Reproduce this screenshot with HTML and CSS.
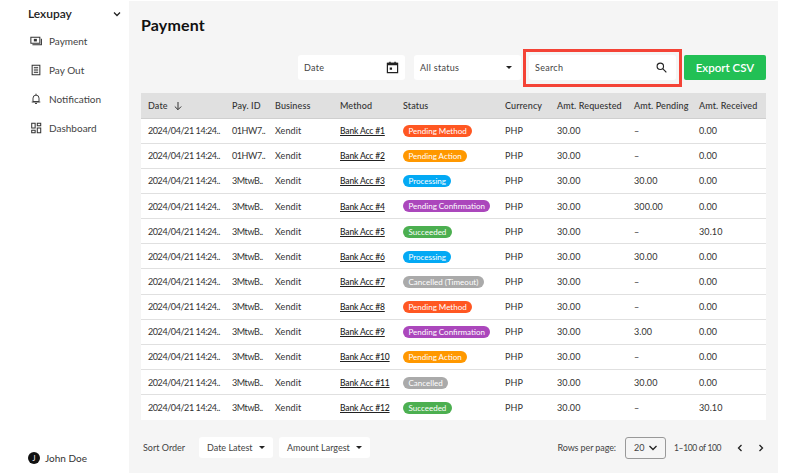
FILE: index.html
```html
<!DOCTYPE html>
<html lang="en">
<head>
<meta charset="utf-8">
<title>Payment</title>
<link rel="stylesheet" href="styles.css">
</head>
<body>
<div class="app">
<aside class="sidebar">
  <div class="brand"><span>Lexupay</span>
    <svg class="chev" viewBox="0 0 10 10"><path d="M2 3.5l3 3 3-3" fill="none" stroke="#222" stroke-width="1.3"/></svg></div>
  <nav class="nav">
    <a class="nav-item"><svg class="nav-ic" viewBox="0 0 14 14"><path d="M1 2.500h10.500v7h-10.500z" fill="none" stroke="#333" stroke-width="1.200"/><path d="M4.500 4.500h3.500v3h-3.500z" fill="#333"/><path d="M13.300 4.500v7h-10.500" fill="none" stroke="#333" stroke-width="1.200"/></svg><span>Payment</span></a>
    <a class="nav-item"><svg class="nav-ic" viewBox="0 0 14 14"><path d="M2.500 1.500h9v11h-9z" fill="none" stroke="#333" stroke-width="1.2"/><path d="M4.500 4h5M4.500 6h5M4.500 8h5M4.500 10h5" stroke="#333"/></svg><span>Pay Out</span></a>
    <a class="nav-item"><svg class="nav-ic" viewBox="0 0 14 14"><path d="M3.500 10v-4a3.500 3.500 0 0 1 7 0v4zM2 10.500h10" fill="none" stroke="#333" stroke-width="1.1"/><path d="M7 .8v1.500M5.800 12.200h2.400" stroke="#333" stroke-width="1.1"/></svg><span>Notification</span></a>
    <a class="nav-item"><svg class="nav-ic" viewBox="0 0 14 14"><path d="M2 1.500h4v5.500h-4zM8.500 1.500h4v3h-4zM8.500 7h4v5.500h-4zM2 9.500h4v3h-4z" fill="none" stroke="#333" stroke-width="1.2"/></svg><span>Dashboard</span></a>
  </nav>
  <div class="user"><span class="avatar">J</span><span>John Doe</span></div>
</aside>
<main class="main">
  <h1 class="title">Payment</h1>
  <div class="filters">
    <div class="field date"><span>Date</span><svg class="ic14" viewBox="0 0 14 14"><path d="M1.500 2.500h11v10h-11z" fill="none" stroke="#222" stroke-width="1.300"/><path d="M1.500 2h11v2.500h-11zM3.500.8h1.500v2h-1.500zM9 .8h1.500v2h-1.500zM4 7h2.500v2.500h-2.500z" fill="#222"/></svg></div>
    <div class="field status"><span>All status</span><i class="caret"></i></div>
    <div class="search-wrap"><div class="field search"><span>Search</span><svg class="ic12" viewBox="0 0 12 12"><circle cx="4.700" cy="4.700" r="3.500" fill="none" stroke="#222" stroke-width="1.200"/><path d="M7.300 7.300l4 4" stroke="#222" stroke-width="1.300"/></svg></div></div>
    <button class="export">Export CSV</button>
  </div>
  <table class="grid">
    <thead><tr><th>Date <svg class="sort" viewBox="0 0 10 10"><path d="M5 1v7.500M1.800 5.500l3.200 3.200 3.200-3.200" fill="none" stroke="#333" stroke-width="1"/></svg></th><th>Pay. ID</th><th>Business</th><th>Method</th><th>Status</th><th>Currency</th><th>Amt. Requested</th><th>Amt. Pending</th><th>Amt. Received</th></tr></thead>
    <tbody>
      <tr><td>2024/04/21 14:24..</td><td>01HW7..</td><td>Xendit</td><td><a class="acc">Bank Acc #1</a></td><td><span class="pill orange">Pending Method</span></td><td>PHP</td><td>30.00</td><td>–</td><td>0.00</td></tr>
      <tr><td>2024/04/21 14:24..</td><td>01HW7..</td><td>Xendit</td><td><a class="acc">Bank Acc #2</a></td><td><span class="pill amber">Pending Action</span></td><td>PHP</td><td>30.00</td><td>–</td><td>0.00</td></tr>
      <tr><td>2024/04/21 14:24..</td><td>3MtwB..</td><td>Xendit</td><td><a class="acc">Bank Acc #3</a></td><td><span class="pill blue">Processing</span></td><td>PHP</td><td>30.00</td><td>30.00</td><td>0.00</td></tr>
      <tr><td>2024/04/21 14:24..</td><td>3MtwB..</td><td>Xendit</td><td><a class="acc">Bank Acc #4</a></td><td><span class="pill purple">Pending Confirmation</span></td><td>PHP</td><td>30.00</td><td>300.00</td><td>0.00</td></tr>
      <tr><td>2024/04/21 14:24..</td><td>3MtwB..</td><td>Xendit</td><td><a class="acc">Bank Acc #5</a></td><td><span class="pill green">Succeeded</span></td><td>PHP</td><td>30.00</td><td>–</td><td>30.10</td></tr>
      <tr><td>2024/04/21 14:24..</td><td>3MtwB..</td><td>Xendit</td><td><a class="acc">Bank Acc #6</a></td><td><span class="pill blue">Processing</span></td><td>PHP</td><td>30.00</td><td>30.00</td><td>0.00</td></tr>
      <tr><td>2024/04/21 14:24..</td><td>3MtwB..</td><td>Xendit</td><td><a class="acc">Bank Acc #7</a></td><td><span class="pill grey">Cancelled (Timeout)</span></td><td>PHP</td><td>30.00</td><td>–</td><td>0.00</td></tr>
      <tr><td>2024/04/21 14:24..</td><td>3MtwB..</td><td>Xendit</td><td><a class="acc">Bank Acc #8</a></td><td><span class="pill orange">Pending Method</span></td><td>PHP</td><td>30.00</td><td>–</td><td>0.00</td></tr>
      <tr><td>2024/04/21 14:24..</td><td>3MtwB..</td><td>Xendit</td><td><a class="acc">Bank Acc #9</a></td><td><span class="pill purple">Pending Confirmation</span></td><td>PHP</td><td>30.00</td><td>3.00</td><td>0.00</td></tr>
      <tr><td>2024/04/21 14:24..</td><td>3MtwB..</td><td>Xendit</td><td><a class="acc">Bank Acc #10</a></td><td><span class="pill amber">Pending Action</span></td><td>PHP</td><td>30.00</td><td>–</td><td>0.00</td></tr>
      <tr><td>2024/04/21 14:24..</td><td>3MtwB..</td><td>Xendit</td><td><a class="acc">Bank Acc #11</a></td><td><span class="pill grey">Cancelled</span></td><td>PHP</td><td>30.00</td><td>30.00</td><td>0.00</td></tr>
      <tr><td>2024/04/21 14:24..</td><td>3MtwB..</td><td>Xendit</td><td><a class="acc">Bank Acc #12</a></td><td><span class="pill green">Succeeded</span></td><td>PHP</td><td>30.00</td><td>–</td><td>30.10</td></tr>
    </tbody>
  </table>
  <div class="footer">
    <span class="sort-label">Sort Order</span>
    <div class="drop d1"><span>Date Latest</span><i class="caret"></i></div>
    <div class="drop d2"><span>Amount Largest</span><i class="caret"></i></div>
    <span class="rows-label">Rows per page:</span>
    <div class="rows"><span>20</span><svg class="chev" viewBox="0 0 10 10"><path d="M1.500 3l3.500 3.500 3.500-3.500" fill="none" stroke="#222" stroke-width="1.300"/></svg></div>
    <span class="range">1–100 of 100</span>
    <svg class="pg first" viewBox="0 0 10 10"><path d="M6.500 2l-3 3 3 3" fill="none" stroke="#222" stroke-width="1.300"/></svg>
    <svg class="pg" viewBox="0 0 10 10"><path d="M3.500 2l3 3-3 3" fill="none" stroke="#222" stroke-width="1.300"/></svg>
  </div>
</main>
</div>
</body>
</html>
```
FILE: styles.css
```css
* { box-sizing: border-box; }
html, body { margin: 0; padding: 0; }
body { width: 802px; height: 473px; overflow: hidden; background: #fff; font-family: "Lato", "Liberation Sans", sans-serif; color: #222; }
.app { display: flex; height: 473px; }
.sidebar { width: 129px; flex: none; display: flex; flex-direction: column; padding: 7px 7px 9px 28px; }
.brand { display: flex; justify-content: space-between; align-items: center; font-size: 12px; font-weight: 600; color: #222; height: 13px; }
.chev { width: 10px; height: 10px; flex: none; }
.nav { display: flex; flex-direction: column; margin-top: 6px; margin-left: 2px; }
.nav-item { display: flex; align-items: center; gap: 7px; height: 29.200px; font-size: 10px; color: #444; }
.nav-ic { width: 12px; height: 12px; flex: none; }
.user { margin-top: auto; display: flex; align-items: center; gap: 5px; font-size: 10px; color: #333; }
.avatar { width: 12px; height: 12px; border-radius: 50%; background: #111; color: #fff; font-size: 7px; display: flex; align-items: center; justify-content: center; }
.main { width: 649px; flex: none; margin-top: 1px; background: #f5f5f5; padding: 0 12px; display: flex; flex-direction: column; }
.title { margin: 14px 0 0; font-size: 16px; line-height: 20px; font-weight: 700; color: #111; letter-spacing: .15px; }
.filters { display: flex; align-items: center; margin-top: 20px; height: 25px; margin-left: 157px; }
.field { flex: none; height: 25px; background: #fff; border-radius: 3px; display: flex; align-items: center; justify-content: space-between; font-size: 9px; color: #444; letter-spacing: .3px; padding: 0 6px; }
.date { width: 107px; }
.status { width: 107px; margin-left: 9px; padding-right: 9px; }
.search-wrap { flex: none; border: 3px solid #f44336; margin-left: 2px; padding: 3px; width: 159px; height: 38px; }
.search { width: 100%; height: 25px; padding-right: 9px; }
.ic14 { width: 13px; height: 13px; }
.ic12 { width: 11px; height: 11px; }
.caret { display: block; width: 0; height: 0; border-left: 3px solid transparent; border-right: 3px solid transparent; border-top: 3px solid #222; }
.export { flex: none; margin-left: 2px; width: 82px; height: 25px; border: 0; border-radius: 2px; background: #22c055; color: #fff; font: 600 11.500px "Lato", "Liberation Sans", sans-serif; padding: 0; }
.grid { width: 625px; margin-top: 13px; border-collapse: collapse; table-layout: fixed; background: #fff; font-size: 9px; }
.grid th { height: 25px; background: #e0e0e0; border-bottom: 1px solid #cfcfcf; font-weight: 500; color: #333; letter-spacing: .12px; text-align: left; padding: 0 0 0 7px; white-space: nowrap; }
.grid td { height: 25.170px; border-bottom: 1px solid #e0e0e0; color: #333; padding: 0 0 0 7px; white-space: nowrap; letter-spacing: .1px; }
.grid td:nth-child(1), .grid td:nth-child(2) { letter-spacing: -.42px; }
.grid tr:last-child td { border-bottom: 0; }
.grid th:nth-child(1) { width: 84px; }
.grid th:nth-child(2) { width: 43px; }
.grid th:nth-child(3) { width: 65px; }
.grid th:nth-child(4) { width: 63px; }
.grid th:nth-child(5) { width: 102px; }
.grid th:nth-child(6) { width: 52px; }
.grid th:nth-child(7) { width: 77px; }
.grid th:nth-child(8) { width: 65px; }
.grid th:nth-child(9) { width: 74px; }
.sort { width: 10px; height: 10px; vertical-align: -2px; margin-left: 3px; }
.grid td .acc { color: #222; text-decoration: underline; font-size: 8.500px; font-weight: 500; letter-spacing: -.15px; }
.grid td .pill { display: inline-block; height: 12px; line-height: 12px; border-radius: 6px; color: #fff; font-size: 8px; padding: 0 5.500px; letter-spacing: 0; vertical-align: middle; }
.orange { background: #ff5722; }
.amber { background: #ff9800; }
.blue { background: #03a9f4; }
.purple { background: #ab47bc; }
.green { background: #4caf50; }
.grey { background: #aaa; }
.footer { display: flex; align-items: center; margin-top: 8px; height: 40px; font-size: 9px; color: #444; padding-left: 2px; }
.drop { flex: none; height: 21px; background: #fff; border-radius: 3px; display: flex; align-items: center; justify-content: space-between; padding: 0 8px; white-space: nowrap; }
.d1 { width: 74px; margin-left: 15px; }
.d2 { width: 91px; margin-left: 6px; }
.sort-label { width: 41px; flex: none; white-space: nowrap; }
.rows-label { margin-left: auto; white-space: nowrap; letter-spacing: -.1px; }
.rows { flex: none; width: 41px; height: 22px; margin-left: 9px; border: 1px solid #999; border-radius: 3px; display: flex; align-items: center; justify-content: space-between; padding: 0 7px 0 8px; }
.range { flex: none; margin-left: 8px; width: 48px; font-size: 8.500px; letter-spacing: -.35px; white-space: nowrap; }
.pg { flex: none; width: 10px; height: 10px; margin-left: 11px; }
.pg.first { margin-left: 13px; }
```
